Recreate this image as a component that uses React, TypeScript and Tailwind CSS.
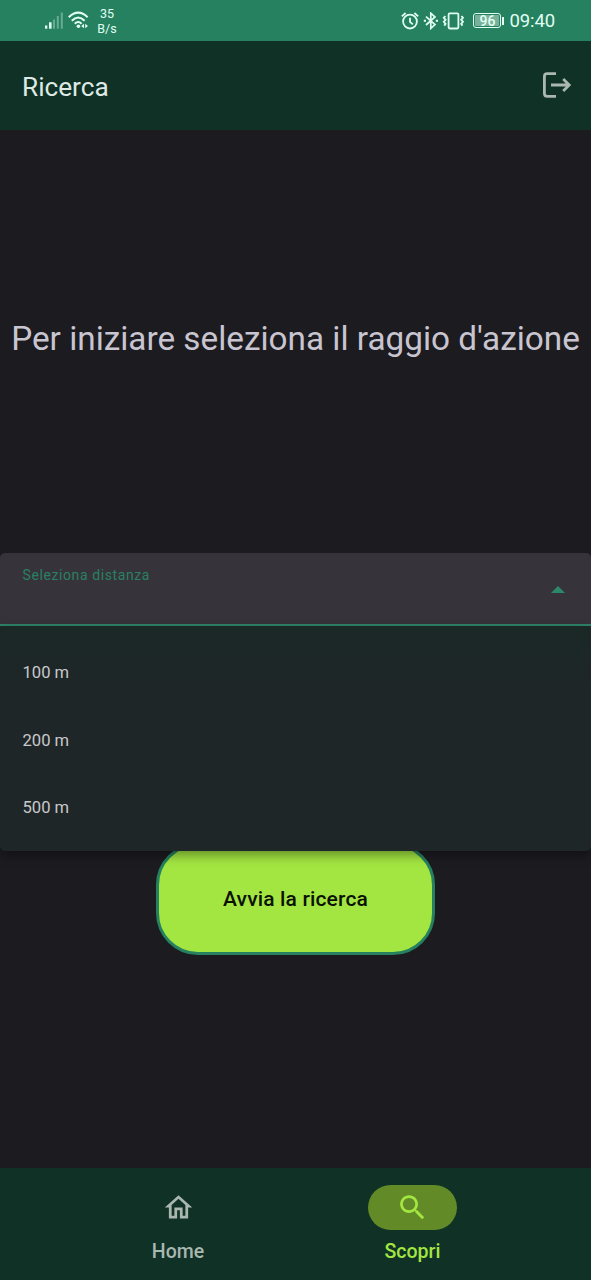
import { useState } from "react";

const distances = ["100 m", "200 m", "500 m"];

function SignalIcon() {
  return (
    <svg width="20" height="18" viewBox="0 0 20 18" fill="#e0fff2">
      <rect x="1" y="13.5" width="2.3" height="3.2" />
      <rect x="5" y="10.3" width="2.6" height="6.4" />
      <rect x="9" y="7.5" width="2" height="9.2" opacity="0.35" />
      <rect x="12.8" y="4" width="2" height="12.7" opacity="0.35" />
      <rect x="16.8" y="0.5" width="2" height="16.2" opacity="0.35" />
    </svg>
  );
}

function WifiIcon() {
  return (
    <svg width="22" height="18" viewBox="0 0 22 18" fill="none" stroke="#e0fff2" strokeWidth="2.1">
      <path d="M0.8 6.2Q10.2-2.8 19.6 6.2" />
      <path d="M3.8 9.7Q10.2 3.2 16.6 9.7" />
      <path d="M6.8 12.7Q10.2 9.2 13.6 12.7" />
      <circle cx="10.4" cy="15.2" r="1.8" fill="#e0fff2" stroke="none" />
      <path d="M16 12.7v4.6l-2.8-2.3zM17.2 12.7v4.6l2.8-2.3z" fill="#e0fff2" stroke="none" />
    </svg>
  );
}

function AlarmIcon() {
  return (
    <svg width="18" height="18" viewBox="0 0 18 18" fill="none" stroke="#e0fff2" strokeWidth="1.8">
      <circle cx="9" cy="9.6" r="6.9" />
      <path d="M9 5.8v4l2.8 2.5M0.8 4.4L4.6 1M17.2 4.4L13.4 1" />
    </svg>
  );
}

function BluetoothIcon() {
  return (
    <svg width="16" height="18" viewBox="0 0 16 18" fill="none" stroke="#e0fff2" strokeWidth="1.7">
      <path d="M3 4.6l9 8L7.8 16.4V1.2L12 5l-9 8" />
      <path d="M0.8 8.8h2.2M12.8 8.8h2.2" strokeWidth="2" />
    </svg>
  );
}

function VibrateIcon() {
  return (
    <svg width="24" height="18" viewBox="0 0 24 18" fill="none" stroke="#e0fff2" strokeWidth="1.8">
      <rect x="6.6" y="1.3" width="9.8" height="15.2" rx="1.2" />
      <path d="M3.4 4L1.8 5.8l1.8 2-1.8 2 1.8 2-1.3 1.8M19.4 4L21 5.8l-1.8 2 1.8 2-1.8 2 1.3 1.8" />
    </svg>
  );
}

function StatusBar() {
  return (
    <div className="flex h-[41px] shrink-0 items-start justify-between bg-[#25815f] pr-9 pl-11 text-[#e0fff2]">
      <div className="flex items-start">
        <div className="mt-3">
          <SignalIcon />
        </div>
        <div className="mt-[11px] ml-[4px]">
          <WifiIcon />
        </div>
        <div className="mt-[7px] ml-[5px] w-[24px] text-center text-[12.5px] leading-[14.5px]">
          <div>35</div>
          <div>B/s</div>
        </div>
      </div>
      <div className="flex h-[41px] items-center">
        <AlarmIcon />
        <div className="ml-1">
          <BluetoothIcon />
        </div>
        <div className="ml-[3px]">
          <VibrateIcon />
        </div>
        <div className="ml-[7px] flex h-[15px] w-[28px] items-center justify-center rounded-[3px] border border-[#e0fff2] p-px">
          <div className="flex h-full w-full items-center justify-center rounded-[1px] bg-[#78b09b] text-[14px] font-medium leading-none">
            96
          </div>
        </div>
        <div className="ml-px h-2 w-[2px] bg-[#e0fff2]" />
        <div className="ml-[5px] text-[18.5px] leading-6 tracking-[-0.1px]">09:40</div>
      </div>
    </div>
  );
}

function LogoutIcon() {
  return (
    <svg width="34" height="34" viewBox="0 0 34 34" fill="none" stroke="#aab8b1" strokeWidth="2.8">
      <path d="M18 5.6H9.2Q6.4 5.6 6.4 8.4v17.2q0 2.8 2.8 2.8H18" />
      <path d="M13 17H31M25.2 11l6 6-6 6" />
    </svg>
  );
}

export default function App() {
  const [open, setOpen] = useState(true);

  return (
    <div className="flex h-[1280px] w-[591px] flex-col overflow-hidden bg-[#1c1b20] font-['Roboto',sans-serif]">
      <StatusBar />
      <header className="flex h-[89px] shrink-0 items-center justify-between bg-[#0f3126] pr-[19px] pl-[22px]">
        <h1 className="mt-[3px] text-[26.2px] leading-9 text-[#dfe9e4]">Ricerca</h1>
        <button type="button" aria-label="Esci" className="mb-[2px]">
          <LogoutIcon />
        </button>
      </header>

      <main className="flex flex-1 flex-col items-center">
        <p className="mt-[187px] text-[33.3px] leading-[44px] whitespace-nowrap text-[#c9c5d0]">
          Per iniziare seleziona il raggio d'azione
        </p>

        <div className="relative mt-[192px] w-full">
          <button
            type="button"
            onClick={() => setOpen(!open)}
            className="flex h-[73px] w-full items-start justify-between rounded-t-[5px] border-b-2 border-[#2f8569] bg-[#36343a] pr-[26px] pl-[22.5px]"
          >
            <span className="mt-[13px] text-[14px] leading-[18px] tracking-[0.6px] text-[#2a8062]">
              Seleziona distanza
            </span>
            <svg className="mt-[33px]" width="14" height="7" viewBox="0 0 14 7" fill="#2b8868">
              <path d="M0 7L7 0l7 7z" />
            </svg>
          </button>
          {open && (
            <ul className="absolute top-full left-0 z-10 w-full rounded-b-[5px] bg-[#1f2628] bg-linear-to-b from-[#1a2826] to-[#1f2628] to-30% pt-[14px] pb-[9px] shadow-[0_4px_12px_rgba(0,0,0,0.4)]">
              {distances.map((distance) => (
                <li
                  key={distance}
                  className="flex h-[67.3px] items-center pl-[22.5px] text-[16.6px] text-[#c9c9cc]"
                >
                  {distance}
                </li>
              ))}
            </ul>
          )}
        </div>

        <button
          type="button"
          className="mt-[217px] h-[112px] w-[279px] rounded-[42px] border-[3px] border-[#25815f] bg-[#a3e642] pt-[2px] text-[21px] font-medium tracking-[0.15px] text-[#0b1204]"
        >
          Avvia la ricerca
        </button>
      </main>

      <nav className="flex h-[112px] shrink-0 justify-center bg-[#0f3126] pt-[17px] text-[19.5px] font-medium">
        <a className="flex w-[234px] flex-col items-center text-[#a9b7b0]">
          <span className="flex h-[45px] w-[89px] items-center justify-center">
            <svg width="33" height="33" viewBox="0 0 24 24" fill="currentColor">
              <path d="M12 5.69l5 4.5V18h-2v-6H9v6H7v-7.81l5-4.5M12 3L2 12h3v8h6v-6h2v6h6v-8h3L12 3z" />
            </svg>
          </span>
          <span className="mt-2 leading-7">Home</span>
        </a>
        <a className="flex w-[235px] flex-col items-center text-[#a3e642]">
          <span className="flex h-[45px] w-[89px] items-center justify-center rounded-full bg-[#628a27]">
            <svg width="33" height="33" viewBox="0 0 24 24" fill="currentColor">
              <path d="M15.5 14h-.79l-.28-.27C15.41 12.59 16 11.11 16 9.5 16 5.91 13.09 3 9.5 3S3 5.91 3 9.5 5.91 16 9.5 16c1.61 0 3.09-.59 4.23-1.57l.27.28v.79l5 4.99L20.49 19l-4.99-5zm-6 0C7.01 14 5 11.99 5 9.5S7.01 5 9.5 5 14 7.01 14 9.5 11.99 14 9.5 14z" />
            </svg>
          </span>
          <span className="mt-2 leading-7">Scopri</span>
        </a>
      </nav>
    </div>
  );
}
